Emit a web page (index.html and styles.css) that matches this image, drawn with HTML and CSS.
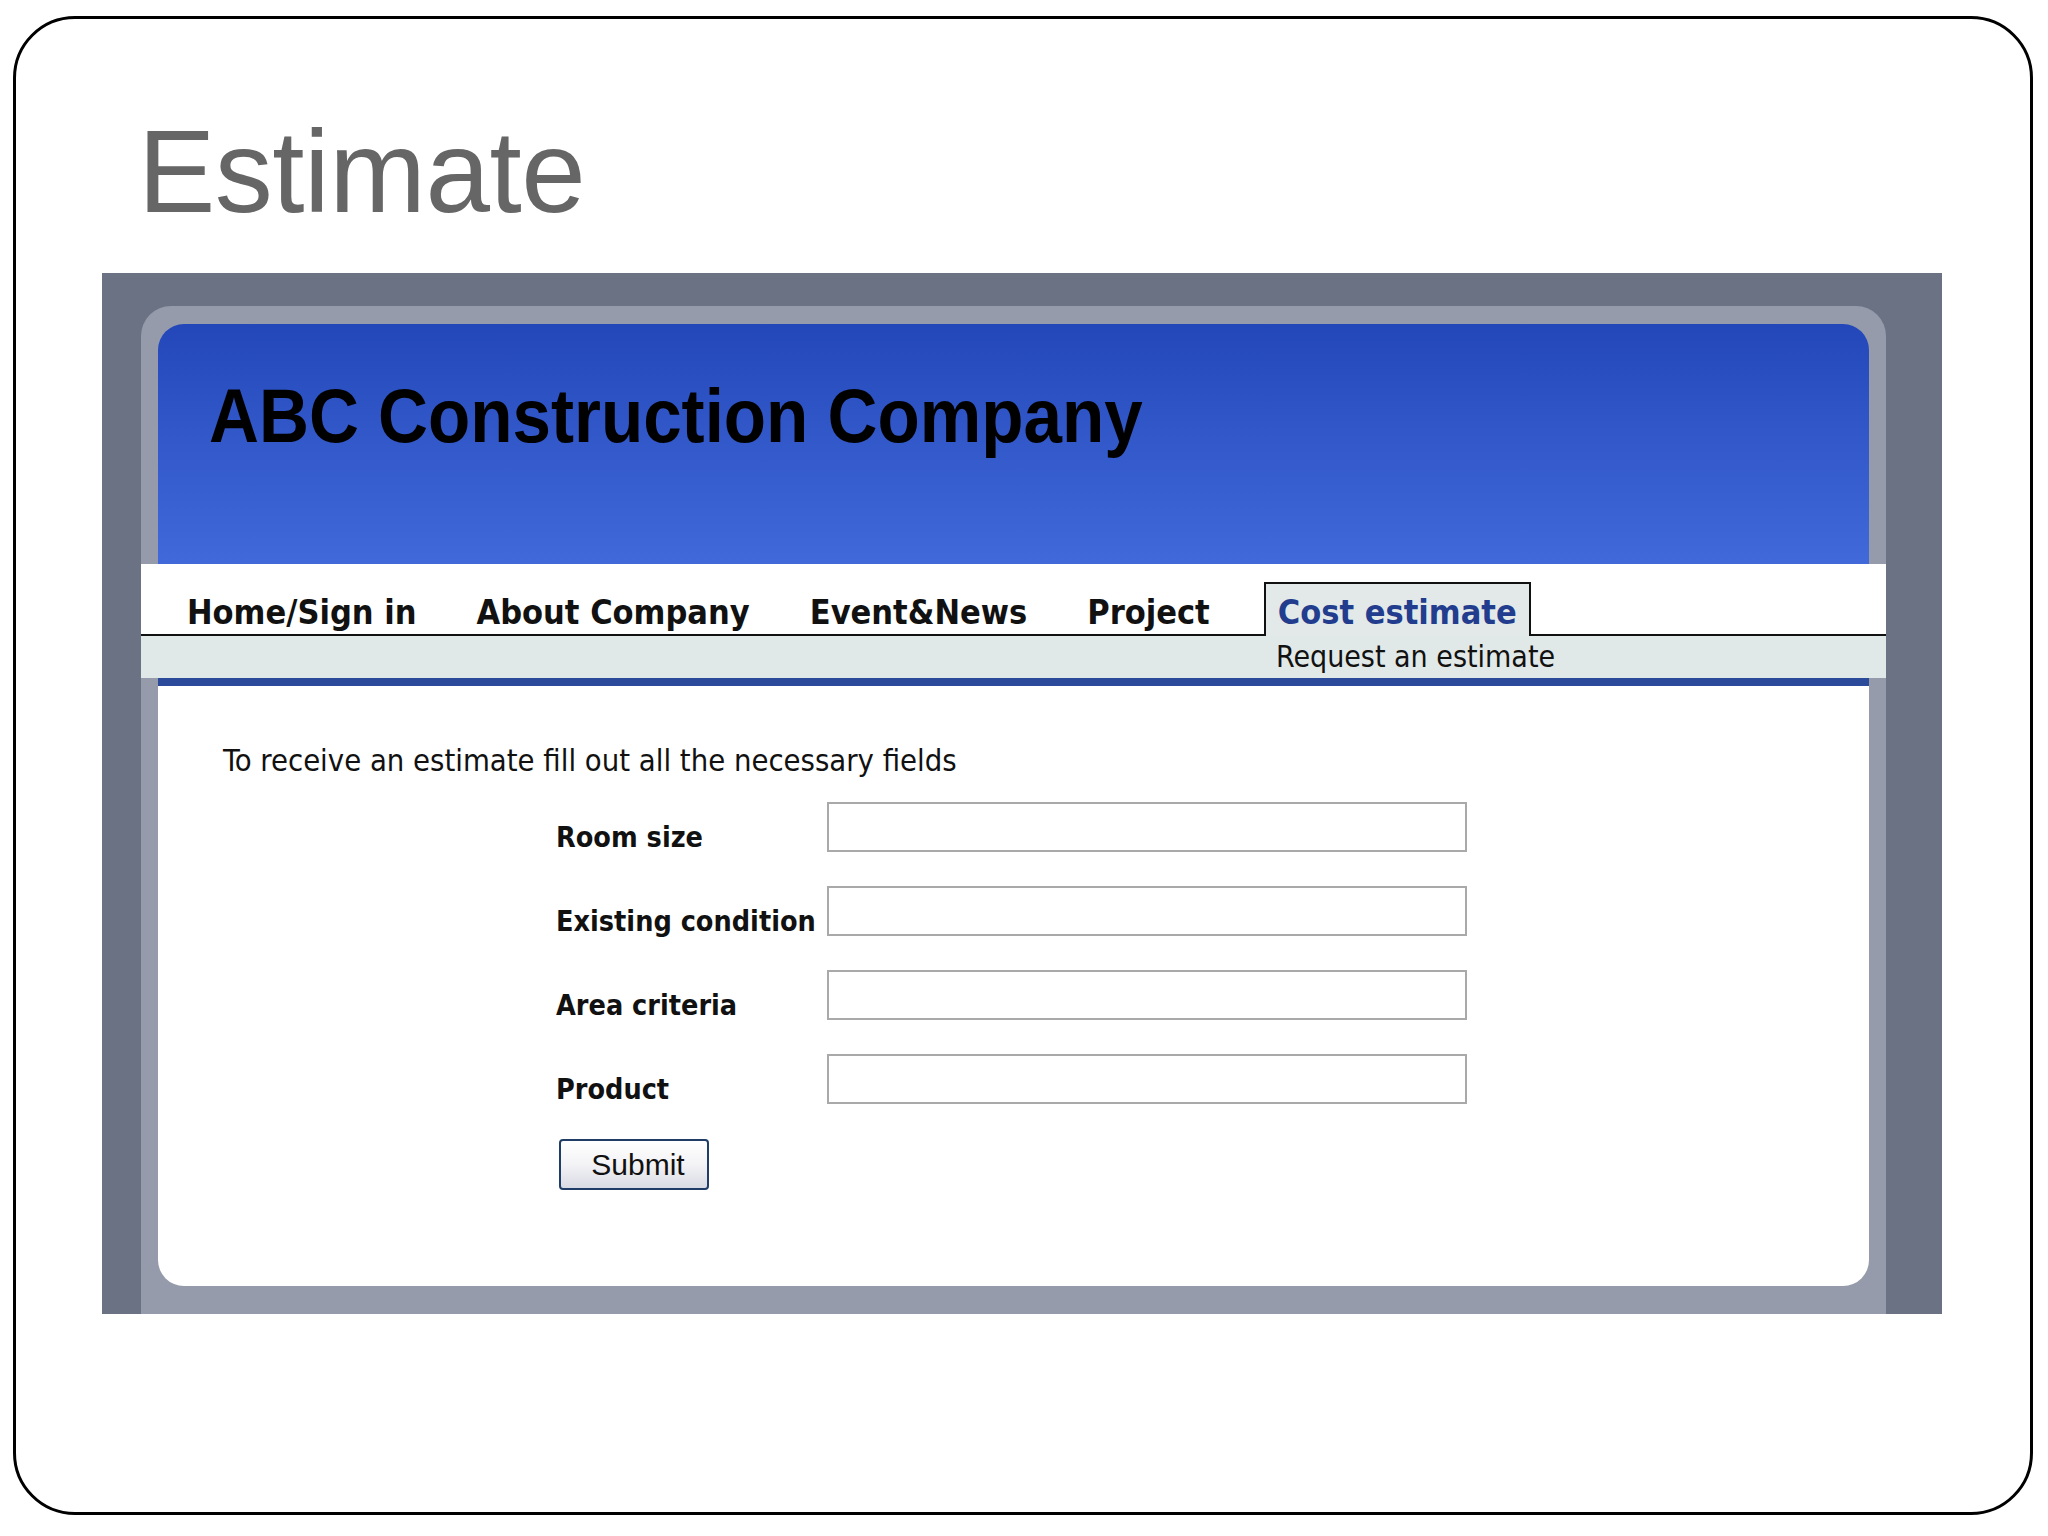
FILE: index.html
```html
<!DOCTYPE html>
<html lang="en">
<head>
<meta charset="utf-8">
<title>Estimate</title>
<link rel="stylesheet" href="styles.css">
</head>
<body>
<div class="slide">
  <h1 class="slide-title">Estimate</h1>
  <div class="screen">
    <div class="frame">
      <header class="site-header">
        <span class="site-name">ABC Construction Company</span>
      </header>
      <nav class="nav">
        <span class="nav-item">Home/Sign in</span>
        <span class="nav-item">About Company</span>
        <span class="nav-item">Event&amp;News</span>
        <span class="nav-item">Project</span>
        <span class="nav-item active">Cost estimate</span>
      </nav>
      <div class="subnav"><span class="subnav-item">Request an estimate</span></div>
      <main class="panel">
        <p class="intro">To receive an estimate fill out all the necessary fields</p>
        <form class="estimate-form">
          <label class="field-label" for="f1">Room size</label>
          <input class="field-input" id="f1" type="text">
          <label class="field-label" for="f2">Existing condition</label>
          <input class="field-input" id="f2" type="text">
          <label class="field-label" for="f3">Area criteria</label>
          <input class="field-input" id="f3" type="text">
          <label class="field-label" for="f4">Product</label>
          <input class="field-input" id="f4" type="text">
          <div class="actions"><button type="button" class="submit">Submit</button></div>
        </form>
      </main>
    </div>
  </div>
</div>
</body>
</html>
```
FILE: styles.css
```css
html, body {
  margin: 0;
  padding: 0;
  background: #ffffff;
}

.slide {
  box-sizing: border-box;
  margin: 16px 0 0 13px;
  width: 2020px;
  height: 1499px;
  border: 3px solid #000;
  border-radius: 62px;
  padding-top: 96px;
  background: #fff;
}

.slide-title {
  margin: 0 0 0 122px;
  height: 114px;
  font-family: "Liberation Sans", Arial, sans-serif;
  font-weight: normal;
  font-size: 116px;
  line-height: 114px;
  color: #666666;
  letter-spacing: -0.5px;
}

.screen {
  margin: 44px 0 0 86px;
  width: 1840px;
  height: 1041px;
  background: #6a7283;
  padding: 33px 56px 0 39px;
  box-sizing: border-box;
}

.frame {
  background: #959bab;
  border-radius: 30px 30px 0 0;
  padding: 18px 17px 28px;
}

.site-header {
  height: 240px;
  box-sizing: border-box;
  border-radius: 26px 26px 0 0;
  background: linear-gradient(to bottom, #2347b8 0%, #3157c8 45%, #4169da 100%);
  padding: 54px 0 0 51px;
}

.site-name {
  display: inline-block;
  font-family: "Liberation Sans", Arial, sans-serif;
  font-weight: bold;
  font-size: 76px;
  line-height: 76px;
  color: #000;
  transform: scaleX(0.91);
  transform-origin: left center;
  white-space: nowrap;
}

.nav {
  margin: 0 -17px;
  height: 70px;
  background: #ffffff;
  border-bottom: 2px solid #111;
  display: flex;
  align-items: flex-end;
  padding-left: 31px;
  gap: 30px;
  font-family: "DejaVu Sans Condensed", "DejaVu Sans", sans-serif;
  font-weight: bold;
  font-size: 34px;
  color: #111;
}

.nav-item {
  padding: 0 15px 2px;
  line-height: 40px;
  white-space: nowrap;
}

.nav-item.active {
  color: #223d8e;
  background: #e3e9e9;
  border: 2px solid #111;
  border-bottom: none;
  margin-bottom: -2px;
  margin-left: 9px;
  padding: 8px 12px 4px;
}

.subnav {
  margin: 0 -17px;
  height: 42px;
  background: #e1e8e8;
  padding-left: 1135px;
  font-family: "DejaVu Sans Condensed", "DejaVu Sans", sans-serif;
  font-size: 30px;
  line-height: 42px;
  color: #111;
}

.panel {
  display: block;
  height: 608px;
  box-sizing: border-box;
  background: #fff;
  border-top: 8px solid #2b4a99;
  border-radius: 0 0 26px 26px;
  padding: 57px 0 0 65px;
}

.intro {
  margin: 0;
  font-family: "DejaVu Sans Condensed", "DejaVu Sans", sans-serif;
  font-size: 30.7px;
  line-height: 36px;
  color: #111;
}

.estimate-form {
  margin: 23px 0 0 333px;
  display: grid;
  grid-template-columns: 271px 640px;
  grid-auto-rows: 50px;
  row-gap: 34px;
}

.field-label {
  align-self: end;
  font-family: "DejaVu Sans Condensed", "DejaVu Sans", sans-serif;
  font-weight: bold;
  font-size: 28.5px;
  line-height: 28px;
  padding-bottom: 0;
  color: #111;
  white-space: nowrap;
}

.field-input {
  box-sizing: border-box;
  width: 640px;
  height: 50px;
  margin: 0;
  border: 2px solid #a9a9a9;
  background: #fff;
}

.actions {
  grid-column: 1 / 3;
  padding-left: 3px;
  margin-top: 1px;
}

.submit {
  width: 150px;
  height: 51px;
  border: 2px solid #1f3d66;
  border-radius: 4px;
  background: linear-gradient(to bottom, #ffffff 0%, #f3f3f6 50%, #d9dbe4 100%);
  font-family: "Liberation Sans", Arial, sans-serif;
  font-size: 30px;
  color: #111;
  padding: 0 0 0 8px;
}
```
